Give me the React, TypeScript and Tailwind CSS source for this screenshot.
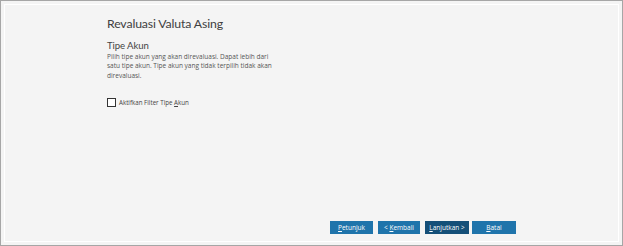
export default function App() {
    return (
        <div className="h-[246px] w-[623px] bg-[#f4f4f4] border border-[#a6a6a6] p-[3px]" style={{ fontFamily: '"Open Sans", "Noto Sans", sans-serif' }}>
            <div className="flex h-full flex-col border border-white px-[102px] pt-[10px] pb-[7px]">
                {/* HEADER */}
                <h1 className="text-[12.3px] leading-[18px] tracking-[-0.15px] text-[#404040]" style={{ fontFamily: 'Lato, sans-serif' }}>Revaluasi Valuta Asing</h1>

                <h2 className="mt-[6px] text-[9.6px] leading-[14px] tracking-[-0.1px] text-[#444444]" style={{ fontFamily: 'Lato, sans-serif' }}>Tipe Akun</h2>
                <p className="mt-[-1px] w-[170px] text-[6.5px] leading-[9.3px] text-[#555555]">
                    Pilih tipe akun yang akan direvaluasi. Dapat lebih dari satu tipe akun. Tipe akun yang tidak terpilih tidak akan direvaluasi.
                </p>

                <label className="mt-[18px] flex items-center gap-[3px] text-[6.2px] text-[#444444]">
                    <span className="h-[9px] w-[9px] border border-[#333333] bg-white"></span>
                    <span>Aktifkan Filter Tipe <span className="underline">A</span>kun</span>
                </label>

                {/* BUTTONS */}
                <div className="mt-auto flex justify-end">
                    <button className="h-[13px] w-[43px] bg-[#1f74ab] text-[6.5px] text-white"><span className="underline">P</span>etunjuk</button>
                    <button className="ml-[5px] h-[13px] w-[42px] bg-[#1f74ab] text-[6.5px] text-white">&lt; <span className="underline">K</span>embali</button>
                    <button className="ml-[5px] h-[13px] w-[44px] bg-[#144f78] text-[6.5px] text-white"><span className="underline">L</span>anjutkan &gt;</button>
                    <button className="ml-[3px] h-[13px] w-[44px] bg-[#1f74ab] text-[6.5px] text-white"><span className="underline">B</span>atal</button>
                </div>
            </div>
        </div>
    );
}
